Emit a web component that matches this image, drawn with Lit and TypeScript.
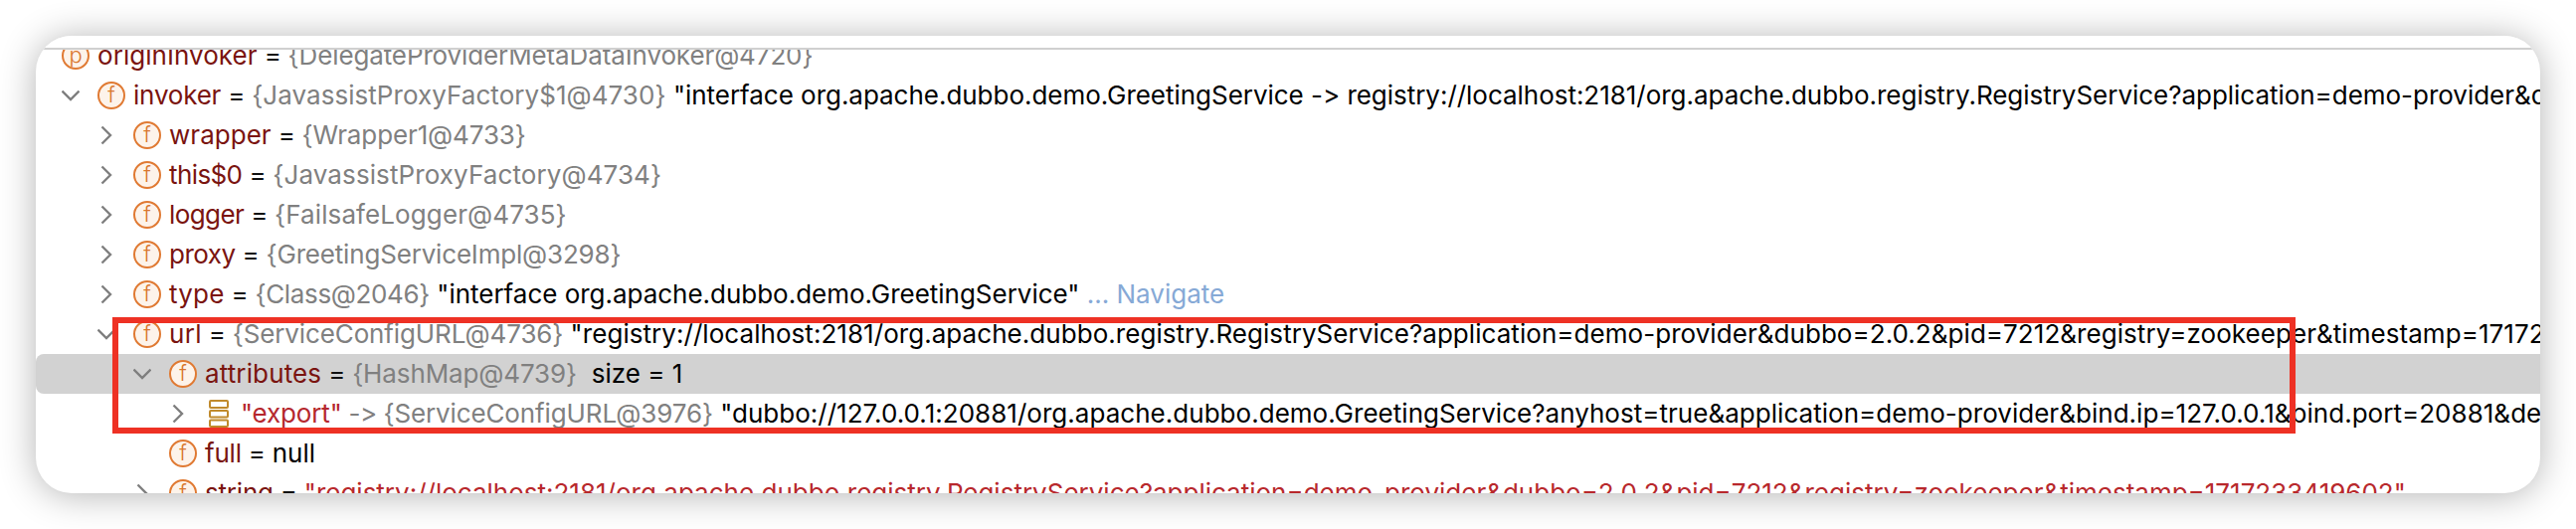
import { LitElement, html, css } from "lit";
import { customElement } from "lit/decorators.js";

type Row = {
  level: number;
  chev?: "right" | "down";
  kind?: "f" | "p" | "map";
  name?: string;
  key?: string;
  eq?: string;
  ref?: string;
  str?: string;
  extra?: string;
  redStr?: string;
  nav?: boolean;
  sel?: boolean;
  nameLs?: number;
  refLs?: number;
  strLs?: number;
};

const ROWS: Row[] = [
  { level: 0, kind: "p", name: "originInvoker", ref: "{DelegateProviderMetaDataInvoker@4720}", nameLs: 0.05 },
  { level: 0, chev: "down", kind: "f", name: "invoker", ref: "{JavassistProxyFactory$1@4730}", refLs: 0.05, strLs: -0.03,
    str: "\"interface org.apache.dubbo.demo.GreetingService -> registry://localhost:2181/org.apache.dubbo.registry.RegistryService?application=demo-provider&dubbo=2.0.2&pid=7212\"" },
  { level: 1, chev: "right", kind: "f", name: "wrapper", ref: "{Wrapper1@4733}", nameLs: 0.03 },
  { level: 1, chev: "right", kind: "f", name: "this$0", ref: "{JavassistProxyFactory@4734}", nameLs: -0.6, refLs: 0.1 },
  { level: 1, chev: "right", kind: "f", name: "logger", ref: "{FailsafeLogger@4735}", nameLs: -0.6, refLs: 0.1 },
  { level: 1, chev: "right", kind: "f", name: "proxy", ref: "{GreetingServiceImpl@3298}", nameLs: -0.5, refLs: -0.18 },
  { level: 1, chev: "right", kind: "f", name: "type", ref: "{Class@2046}", nameLs: 0.2, refLs: -0.35, strLs: -0.02,
    str: "\"interface org.apache.dubbo.demo.GreetingService\"", nav: true },
  { level: 1, chev: "down", kind: "f", name: "url", ref: "{ServiceConfigURL@4736}", nameLs: 0.3, strLs: 0.05,
    str: "\"registry://localhost:2181/org.apache.dubbo.registry.RegistryService?application=demo-provider&dubbo=2.0.2&pid=7212&registry=zookeeper&timestamp=1717233419602\"" },
  { level: 2, chev: "down", kind: "f", name: "attributes", ref: "{HashMap@4739}", extra: "size = 1", sel: true, nameLs: 0.13 },
  { level: 3, chev: "right", kind: "map", key: "\"export\"", ref: "{ServiceConfigURL@3976}", strLs: 0.03,
    str: "\"dubbo://127.0.0.1:20881/org.apache.dubbo.demo.GreetingService?anyhost=true&application=demo-provider&bind.ip=127.0.0.1&bind.port=20881&deprecated=false&dubbo=2.0.2\"" },
  { level: 2, kind: "f", name: "full", eq: "null" },
  { level: 2, chev: "right", kind: "f", name: "string",
    redStr: "\"registry://localhost:2181/org.apache.dubbo.registry.RegistryService?application=demo-provider&dubbo=2.0.2&pid=7212&registry=zookeeper&timestamp=1717233419602\"" },
];

@customElement("app-root")
export class AppRoot extends LitElement {
  static styles = css`
    :host {
      display: block;
      height: 532px;
      padding: 36px;
      box-sizing: border-box;
      background: #fff;
      font-family: Inter, "Liberation Sans", sans-serif;
      font-variant-ligatures: none;
      font-feature-settings: "calt" 0, "liga" 0;
    }
    .card {
      position: relative;
      height: 460px;
      background: #fff;
      border-radius: 36px;
      box-shadow: 0 2px 36px rgba(0, 0, 0, 0.3);
    }
    .clip {
      height: 100%;
      border-radius: 36px;
      overflow: hidden;
      display: flex;
      flex-direction: column;
    }
    .head {
      flex: none;
      height: 12px;
      border-bottom: 2px solid #d0d0d0;
      box-sizing: content-box;
      position: relative;
      z-index: 1;
      background: #fff;
    }
    .tree {
      flex: 1;
      min-height: 0;
      overflow: hidden;
    }
    .rows {
      margin-top: -14px;
    }
    .row {
      height: 40px;
      display: flex;
      align-items: center;
      white-space: nowrap;
      font-size: 26px;
      line-height: 40px;
    }
    .row.sel {
      background: #d2d2d2;
      border-radius: 8px 0 0 8px;
    }
    .slot {
      flex: none;
      width: 36px;
      display: flex;
      align-items: center;
    }
    .chev {
      display: block;
      width: 18px;
      height: 20px;
      fill: none;
      stroke: #7f7f7f;
      stroke-width: 2.4;
    }
    .ic {
      flex: none;
      width: 28px;
      height: 28px;
      box-sizing: border-box;
      border-radius: 50%;
      border: 2px solid #e07a33;
      background: #fdf3ea;
      color: #d9772f;
      font-size: 22px;
      font-weight: 300;
      line-height: 23px;
      text-align: center;
      margin-right: 8px;
    }
    .map {
      flex: none;
      display: block;
      width: 28px;
      height: 28px;
      margin-right: 8px;
      fill: none;
      stroke: #c08a2c;
      stroke-width: 2;
    }
    .name { color: #7a1410; letter-spacing: -0.2px; }
    .key { color: #b5272d; letter-spacing: -0.15px; }
    .op { color: #111; letter-spacing: -0.3px; }
    .ref { color: #808080; letter-spacing: -0.12px; }
    .str { color: #000; }
    .red { color: #b8282c; }
    .arrow { color: #808080; letter-spacing: -0.5px; }
    .nav { color: #86a9d6; }
    .box {
      position: absolute;
      left: 77px;
      top: 283px;
      width: 2195px;
      height: 117px;
      box-sizing: border-box;
      border: 6px solid #ee3124;
      pointer-events: none;
    }
  `;

  private chev(dir?: "right" | "down") {
    if (!dir) return null;
    return dir === "right"
      ? html`<svg class="chev" viewBox="0 0 18 20"><path d="M4.5 1.5 13 10 4.5 18.5"></path></svg>`
      : html`<svg class="chev" viewBox="0 0 18 20"><path d="M0.5 5.5 9 14 17.5 5.5"></path></svg>`;
  }

  private ls(v?: number) {
    return v === undefined ? "" : `letter-spacing:${v}px`;
  }

  private row(r: Row, i: number) {
    const noSlot = i === 0;
    return html`<div class="row ${r.sel ? "sel" : ""}" style="padding-left:${26 + 36 * r.level}px">
      ${noSlot ? null : html`<span class="slot">${this.chev(r.chev)}</span>`}
      ${r.kind === "map"
        ? html`<svg class="map" viewBox="0 0 28 28">
            <rect x="5" y="1" width="18" height="7" rx="1"></rect>
            <rect x="5" y="11" width="18" height="6.5" rx="1"></rect>
            <rect x="5" y="20.5" width="18" height="6.5" rx="1"></rect>
          </svg>`
        : html`<span class="ic">${r.kind}</span>`}
      <span>
        ${r.name ? html`<span class="name" style=${this.ls(r.nameLs)}>${r.name}</span><span class="op"> = </span>` : null}
        ${r.key ? html`<span class="key">${r.key}</span><span class="arrow"> -> </span>` : null}
        ${r.eq ? html`<span class="str">${r.eq}</span>` : null}
        ${r.ref ? html`<span class="ref" style=${this.ls(r.refLs)}>${r.ref}</span>` : null}
        ${r.str ? html`<span class="str" style=${this.ls(r.strLs)}> ${r.str}</span>` : null}
        ${r.redStr ? html`<span class="red">${r.redStr}</span>` : null}
        ${r.nav ? html`<span class="nav"> ... Navigate</span>` : null}
        ${r.extra ? html`<span class="str">&nbsp;${r.extra}</span>` : null}
      </span>
    </div>`;
  }

  render() {
    return html`<div class="card">
      <div class="clip">
        <div class="head"></div>
        <div class="tree"><div class="rows">${ROWS.map((r, i) => this.row(r, i))}</div></div>
      </div>
      <div class="box"></div>
    </div>`;
  }
}
